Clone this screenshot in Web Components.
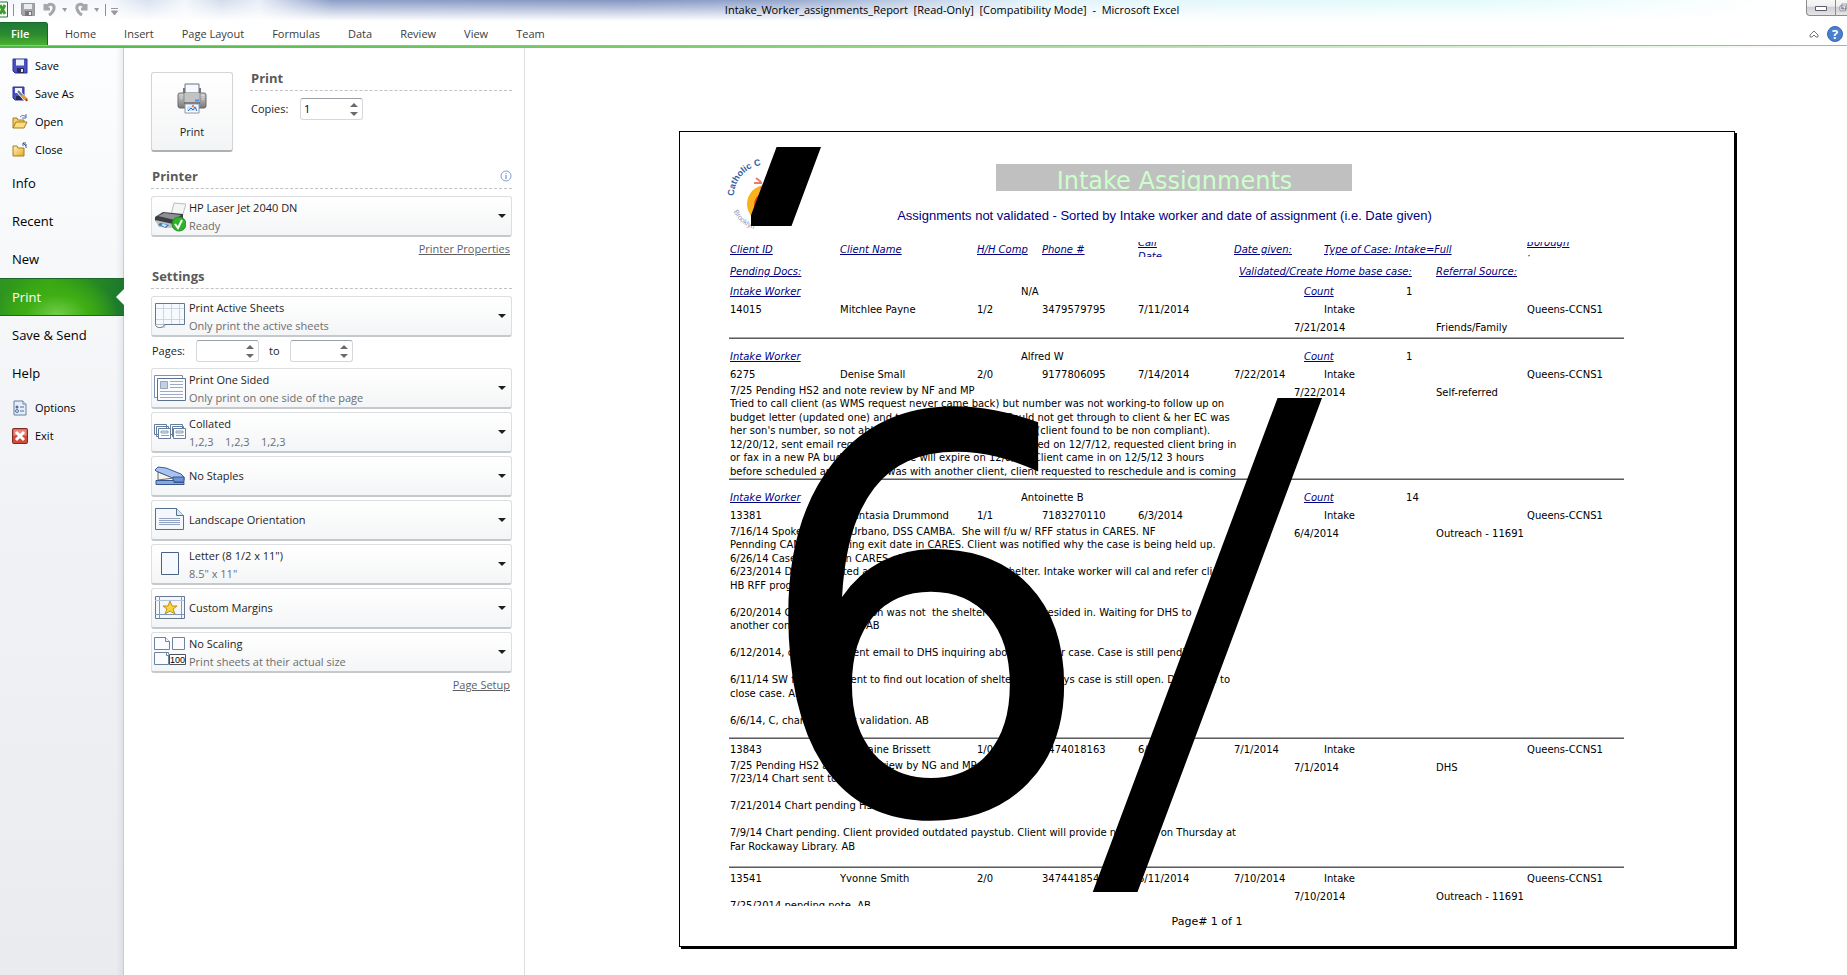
<!DOCTYPE html>
<html lang="en">
<head>
<meta charset="utf-8">
<title>Intake_Worker_assignments_Report - Microsoft Excel</title>
<style>
  html, body { margin: 0; height: 100%; }
  body {
    font-family: "Open Sans", "Noto Sans", sans-serif;
    font-size: 11px;
    line-height: 18px;
    color: #1e1e1e;
    background: #fff;
  }
</style>
</head>
<body>
<excel-window></excel-window>

<script>
// icons shared by the components
const icons = {
  save: `<svg width="16" height="16" viewBox="0 0 16 16"><path d="M1 1h14v14H3l-2-2z" fill="#4a52c0" stroke="#2b3190"/><path d="M4 1.500h8v6H4z" fill="#eef1fb"/><path d="M5 10h7v5H5z" fill="#272b55"/><path d="M9 11h2v3H9z" fill="#dfe3f7"/></svg>`,
  saveAs: `<svg width="16" height="16" viewBox="0 0 16 16"><path d="M1 1h11v13H3l-2-2z" fill="#4a52c0" stroke="#2b3190"/><path d="M3 2h7v5H3z" fill="#eef1fb"/><path d="M4 10h6v4H4z" fill="#272b55"/><path d="M5 4l9 10" stroke="#fff" stroke-width="4"/><path d="M6 5l7 8" stroke="#6b7390" stroke-width="2"/><path d="M10 9l5 5" stroke="#e0a040" stroke-width="3"/><path d="M14 13l1 2" stroke="#b03a2a" stroke-width="2"/></svg>`,
  open: `<svg width="16" height="16" viewBox="0 0 16 16"><path d="M1 14V4h4l1 2h6v3" fill="#f3cf6c" stroke="#a67c1e"/><path d="M1 14l3-6h11l-3 6z" fill="#fbdc7e" stroke="#a67c1e"/><path d="M8 3c2-2 4-2 6 0M14 0v4h-4" fill="none" stroke="#4a6ea9"/></svg>`,
  close: `<svg width="16" height="16" viewBox="0 0 16 16"><defs><linearGradient id="f" x1="0" y1="0" x2="1" y2="1"><stop stop-color="#fdf3c0"/><stop offset="1" stop-color="#e9a81f"/></linearGradient></defs><path d="M1 14V4h4l1 2h6v8z" fill="url(#f)" stroke="#a67c1e"/><path d="M14 6V2M11 4V1h3M11 1l3 3" fill="none" stroke="#3a5488"/></svg>`,
  options: `<svg width="16" height="16" viewBox="0 0 16 16"><path d="M2 1h9l3 3v11H2z" fill="#e6edf8" stroke="#64809f"/><path d="M11 1v3h3" fill="#fff" stroke="#64809f"/><circle cx="5" cy="7" r="1.500" fill="#4e6f9b"/><circle cx="5" cy="11" r="1.500" fill="none" stroke="#4e6f9b"/><path d="M8 7h4M8 11h4" stroke="#4e6f9b"/></svg>`,
  exit: `<svg width="16" height="16" viewBox="0 0 16 16"><rect x=".5" y=".5" width="15" height="15" rx="1" fill="#cf4a38" stroke="#7e2a20"/><rect x="1.500" y="1.500" width="13" height="6" fill="#e58a7b"/><path d="M4 4l8 8M12 4l-8 8" stroke="#fff" stroke-width="3"/></svg>`,
  printer: `<svg width="32" height="32" viewBox="0 0 32 32"><defs><linearGradient id="p" x1="0" y1="0" x2="0" y2="1"><stop stop-color="#d5d5d5"/><stop offset="1" stop-color="#777"/></linearGradient></defs><path d="M9 2h14v11H9z" fill="#f7f9ff" stroke="#65708a"/><path d="M7 6h2v6H7zM23 6h2v6h-2z" fill="#777"/><rect x="2" y="11" width="28" height="15" rx="2" fill="url(#p)" stroke="#6a6a6a"/><path d="M8 11v10h16V11" fill="#c3c3c3" stroke="#8c8c8c"/><path d="M8 21h16" stroke="#555"/><path d="M19 18.500h4" stroke="#4d8ef0" stroke-width="2"/><path d="M27 13v6M5 16h1" stroke="#f1f1f1" stroke-dasharray="1 1"/><path d="M9 22h14v9H9z" fill="#fff" stroke="#8a93a8"/><path d="M11 24h10v5H11z" fill="#cfe4fb"/><path d="M12 29l3-3 2 2 2-3 2 4" fill="none" stroke="#2c70c8"/><circle cx="17" cy="24" r="1" fill="#e8562a"/></svg>`,
  device: `<svg width="32" height="32" viewBox="0 0 32 32"><path d="M17 15L20 3l12 1-4 13z" fill="#f5f5f5" stroke="#bdbdbd"/><path d="M1 17l8-5 20 2v6l-9 7L1 21z" fill="#3c3f42"/><path d="M4 16l6-3 17 2-6 5z" fill="#8d9195"/><path d="M1 20l18 4v4L5 27z" fill="#b9c0c6"/><path d="M6 23l9 2-3 3-8-3z" fill="#3d78b4"/><path d="M9 24l4 1-2 2-4-2z" fill="#d8eefc"/><circle cx="25" cy="24" r="7" fill="#2fb32a" stroke="#1c8d1b"/><path d="M21 24l3 4 4-8" fill="none" stroke="#fff" stroke-width="2"/></svg>`,
  sheets: `<svg width="32" height="32" viewBox="0 0 32 32"><path d="M2 4h29v21H12l-1 3H4l-2-3z" fill="#cfd8e4"/><path d="M1.500 3.500h29v21h-29z" fill="#f6f9fe" stroke="#64788f"/><path d="M9.500 4v20M17.500 4v20M25.500 4v20M2 8.500h28M2 19.500h28" stroke="#cdd4e3"/><path d="M1.500 24.500c0 4 8 4 9 0" fill="#fff" stroke="#64788f"/></svg>`,
  oneSided: `<svg width="32" height="32" viewBox="0 0 32 32"><path d="M.5 3.500h28v22H.5z" fill="#fff" stroke="#7d92b3"/><path d="M3.500 6.500h28v22h-28z" fill="#fbfcff" stroke="#5a718f"/><path d="M6.500 9.500h7v7h-7z" fill="#c4cfdf" stroke="#94a5c0"/><path d="M16 9.500h13M16 12.500h13M16 15.500h13M6 19.500h23M6 22.500h23M6 25.500h23" stroke="#9caac4"/></svg>`,
  collated: `<svg width="32" height="32" viewBox="0 0 32 32"><g fill="#fff" stroke="#647c9d"><path d="M.5 8.500h12v10H.5zM2.500 10.500h12v10h-12zM16.500 8.500h12v10h-12zM18.500 10.500h11v10h-11z"/><path d="M4.500 12.500h12v10h-12zM19.500 12.500h12v10h-12z"/></g><path d="M7 15h7v2H7zM22 15h7v2h-7z" fill="#dbe4f3" stroke="#8ea0bd"/><path d="M7 19.500h8M22 19.500h8" stroke="#8ea0bd"/></svg>`,
  stapler: `<svg width="32" height="32" viewBox="0 0 32 32"><path d="M4 20V12l16 6z" fill="#f5f5ec" stroke="#6d6d60"/><path d="M1 10l3-3 8 1 15 6 3 3v3l-9-1L2 11z" fill="#a9c3ef" stroke="#3b5c9d"/><path d="M19 17h11v5H19z" fill="#6f92d2" stroke="#35568f"/><path d="M2 20.500h18v2h10v2H2z" fill="#88a7dc" stroke="#35568f"/></svg>`,
  landscape: `<svg width="32" height="32" viewBox="0 0 32 32"><path d="M1.500 4.500h21l7 7v14h-28z" fill="#f4f7fc" stroke="#56708f"/><path d="M22.500 4.500v7h7" fill="#dce6f6" stroke="#56708f"/><path d="M5 14.500h21M5 16.500h21M5 18.500h21M5 20.500h21" stroke="#92a2c2"/></svg>`,
  letter: `<svg width="32" height="32" viewBox="0 0 32 32"><path d="M7.500 4.500h17v22h-17z" fill="#f6f9fe" stroke="#4a6385"/></svg>`,
  margins: `<svg width="32" height="32" viewBox="0 0 32 32"><path d="M1.500 4.500h29v22h-29z" fill="#f3f6fb" stroke="#66788f"/><path d="M5.500 4v22M27.500 4v22M1 22.500h29" stroke="#7e99bd"/><path d="M1 8.500h29" stroke="#b5c3d8"/><path d="M16 9l2 5h5l-4 3 2 5-5-3-5 3 2-5-4-3h5z" fill="#fbd53c" stroke="#c48f16"/></svg>`,
  scaling: `<svg width="32" height="32" viewBox="0 0 32 32"><g fill="#fbfcff" stroke="#6c83a4"><path d="M.5 1.500h11l4 4v8H.5z"/><path d="M11.500 1.500v4h4"/><path d="M18.500 1.500h12v12h-12z"/><path d="M.5 16.500h14v12H.5z"/><path d="M12.500 16.500v3h3"/></g><path d="M15.500 18.500h16v10h-16z" fill="#fff" stroke="#4a4f58"/><text x="16" y="27" font-family="Liberation Sans, sans-serif" font-size="9" fill="#000">100</text></svg>`,
};

class ExcelWindow extends HTMLElement {
  constructor() {
    super();
    this.attachShadow({ mode: "open" });
    this.shadowRoot.innerHTML = `
      <style>
        :host { display: flex; flex-direction: column; min-height: 100%; }
        main { flex: 1; display: flex; }
        print-preview { flex: 1; }
      </style>
      <title-bar></title-bar>
      <ribbon-tabs></ribbon-tabs>
      <main>
        <backstage-nav></backstage-nav>
        <print-settings></print-settings>
        <print-preview></print-preview>
      </main>
    `;
  }
}

class TitleBar extends HTMLElement {
  constructor() {
    super();
    this.attachShadow({ mode: "open" });
    this.shadowRoot.innerHTML = `
      <style>
        :host {
          display: flex;
          height: 22px;
          overflow: hidden;
          background:
            linear-gradient(to bottom, rgba(255,255,255,0) 0, #fff 21px),
            linear-gradient(to right, #f4f7fb 0, #f4f7fb 6%, #d8e1f0 8%, #f2f6fb 10%, #d3dcec 12%, #e8eef7 14%, #8d9fc8 18%, #8496c2 34%, #93a5cd 42%, #c3d2e8 50%, #e2f4fa 56%, #e4fbfb 80%, #fff 96%);
        }
        .quick { display: flex; align-items: center; height: 20px; }
        button { border: 0; padding: 0; background: none; display: flex; }
        .name { flex: 1; text-align: center; line-height: 20px; color: #000; white-space: pre; padding-right: 22px; }
        .frame {
          display: flex;
          height: 15px;
          border: 1px solid #8b8b90;
          border-width: 0 0 1px 1px;
          border-radius: 0 0 0 4px;
          background: linear-gradient(#f7f7f8, #f0f0f2 40%, #cfcfd3 50%, #e6e6e9);
        }
        .frame button { align-items: center; justify-content: center; width: 28px; height: 15px; }
        .frame button + button { width: 12px; border-left: 1px solid #8b8b90; overflow: hidden; justify-content: flex-start; }
      </style>
      <div class="quick">
        <svg width="14" height="20" viewBox="0 0 14 20"><path d="M0 2h7.500v15H0" fill="#fff" stroke="#1f7a34"/><path d="M0 5l5 9M5 5l-5 9" stroke="#3f9d2f" stroke-width="3"/><path d="M13.500 4v12" stroke="#8e9097"/></svg>
        <button aria-label="Save"><svg width="28" height="20" viewBox="0 0 28 20"><path d="M7.500 3.500h13v12h-12l-1-1z" fill="#a6a6aa" stroke="#97979b"/><path d="M10 4h8v5h-8z" fill="#ececef"/><path d="M11 11h7v5h-7z" fill="#77777b"/><path d="M15 12h2v3h-2z" fill="#eee"/></svg></button>
        <button aria-label="Undo"><svg width="32" height="20" viewBox="0 0 32 20"><path d="M3 4v5h5M4 8c3-6 9-4 8 1-1 3-3 5-5 6" fill="none" stroke="#a6a6a9" stroke-width="3"/><path d="M20 8h5l-2 4z" fill="#9a9a9e"/></svg></button>
        <button aria-label="Redo"><svg width="32" height="20" viewBox="0 0 32 20"><path d="M12 4v5H7M11 8C8 2 2 4 3 9c1 3 3 5 5 6" fill="none" stroke="#a6a6a9" stroke-width="3"/><path d="M20 8h5l-2 4z" fill="#9a9a9e"/><path d="M31.500 4v12" stroke="#8e9097"/></svg></button>
        <button aria-label="Customize"><svg width="14" height="20" viewBox="0 0 14 20"><path d="M5 8.500h7M5.500 11h6l-3 4z" fill="#9a9a9e" stroke="#9a9a9e"/></svg></button>
      </div>
      <div class="name">Intake_Worker_assignments_Report  [Read-Only]  [Compatibility Mode]  -  Microsoft Excel</div>
      <div class="frame">
        <button aria-label="Minimize"><svg width="12" height="12" viewBox="0 0 12 12"><path d="M.5 4.500h11v4H.5z" fill="#fff" stroke="#5a5c6c"/></svg></button>
        <button aria-label="Restore"><svg width="18" height="14" viewBox="0 0 18 14"><path d="M9.500.5h8v8h-8zM6.500 3.500h9v8h-9z" fill="#fff" stroke="#5a5c6c"/><path d="M9.500 6.500h3v2h-3z" fill="#ccc" stroke="#5a5c6c"/></svg></button>
      </div>
    `;
  }
}

class RibbonTabs extends HTMLElement {
  constructor() {
    super();
    this.attachShadow({ mode: "open" });
    const tabs = ["Home", "Insert", "Page Layout", "Formulas", "Data", "Review", "View", "Team"];
    this.shadowRoot.innerHTML = `
      <style>
        :host { display: block; background: #fff; }
        nav { display: flex; height: 23px; padding-right: 4px; }
        a { padding: 0 14px; line-height: 24px; color: #3b3b3b; text-decoration: none; white-space: nowrap; }
        a.file {
          box-sizing: border-box;
          width: 48px;
          margin-right: 3px;
          padding: 0 0 0 11px;
          color: #fff;
          font-weight: 600;
          border-radius: 0 3px 0 0;
          border: 1px solid #17672a;
          border-width: 1px 1px 0 0;
          line-height: 22px;
          background: linear-gradient(#207a35, #2b8a2f 50%, #4bb030);
        }
        .tools { margin-left: auto; display: flex; align-items: center; gap: 8px; }
        button { border: 0; padding: 0; background: none; display: flex; }
        .line { height: 3px; border-top: 1px solid #a9afb5; box-sizing: border-box; background: linear-gradient(to right, #4fb848, #7ccb6c 35%, #b4e0aa 62%, #d5eed0 80%, #fff); }
      </style>
      <nav>
        <a class="file" href="#file">File</a>
        ${tabs.map((tab) => `<a href="#${tab}">${tab}</a>`).join("")}
        <div class="tools">
          <button aria-label="Minimize the Ribbon"><svg width="10" height="10" viewBox="0 0 10 10"><path d="M1 6l4-4 4 4v2H7L5 6 3 8H1z" fill="#fff" stroke="#77797f"/></svg></button>
          <button aria-label="Help"><svg width="16" height="16" viewBox="0 0 16 16"><circle cx="8" cy="8" r="7.500" fill="#4a7fd0" stroke="#3463b3"/><text x="8" y="13" text-anchor="middle" font-family="Open Sans, sans-serif" font-weight="700" font-size="13" fill="#fff">?</text></svg></button>
        </div>
      </nav>
      <div class="line"></div>
    `;
  }
}

class BackstageNav extends HTMLElement {
  constructor() {
    super();
    this.attachShadow({ mode: "open" });
    const small = (text, icon) => `<a class="small" href="#${icon}">${icons[icon]}${text}</a>`;
    const big = (text) => `<a href="#${text}">${text}</a>`;
    this.shadowRoot.innerHTML = `
      <style>
        :host {
          display: block;
          box-sizing: border-box;
          width: 124px;
          border-right: 1px solid #c8ccd2;
          background: linear-gradient(to right, transparent 116px, rgba(120,130,150,.12)), linear-gradient(#fcfdfe, #f1f3f6 45%, #e9ebef);
        }
        nav { display: flex; flex-direction: column; padding-top: 4px; }
        a { display: flex; align-items: center; height: 38px; padding-left: 12px; color: #000; text-decoration: none; font-size: 13px; }
        a.small { height: 28px; gap: 7px; font-size: 11px; }
        a:not(.small) + a.small { margin-top: 2px; }
        a.current {
          justify-content: space-between;
          margin-right: -1px;
          color: #fff;
          background: radial-gradient(ellipse 62px 42px at 46% 100%, #74cf4c, #3fae14 50%, rgba(63,174,20,0)), linear-gradient(to right, #2e9420, #38a611 40%, #1d7a2c 96%);
          box-shadow: inset 0 1px #17682a, inset 0 -1px #17682a;
        }
      </style>
      <nav>
        ${small("Save", "save")}${small("Save As", "saveAs")}${small("Open", "open")}${small("Close", "close")}
        ${big("Info")}${big("Recent")}${big("New")}
        <a class="current" href="#print">Print <svg width="8" height="16" viewBox="0 0 8 16"><path d="M8 0L0 8l8 8z" fill="#fff"/></svg></a>
        ${big("Save &amp; Send")}${big("Help")}
        ${small("Options", "options")}${small("Exit", "exit")}
      </nav>
    `;
  }
}

class SpinBox extends HTMLElement {
  constructor() {
    super();
    this.attachShadow({ mode: "open" });
    this.shadowRoot.innerHTML = `
      <style>
        :host { display: flex; align-items: center; }
        label { width: var(--label-width, 44px); }
        .box {
          box-sizing: border-box;
          display: flex;
          width: 63px;
          height: 22px;
          border: 1px solid #d5d8dc;
          border-top-color: #9da0a5;
          border-radius: 3px;
          background: #fff;
        }
        input { flex: 1; min-width: 0; border: 0; outline: 0; padding: 0 3px; background: none; font: inherit; color: #000; }
        .arrows { display: flex; flex-direction: column; justify-content: center; gap: 5px; width: 12px; }
        button { display: flex; border: 0; padding: 0; background: none; }
      </style>
      <label for="value">${this.getAttribute("label")}</label>
      <div class="box">
        <input id="value" type="text" value="${this.getAttribute("value") || ""}">
        <div class="arrows">
          <button aria-label="Increase"><svg width="8" height="4" viewBox="0 0 8 4"><path d="M0 4l4-4 4 4z" fill="#6a6a6a"/></svg></button>
          <button aria-label="Decrease"><svg width="8" height="4" viewBox="0 0 8 4"><path d="M0 0l4 4 4-4z" fill="#6a6a6a"/></svg></button>
        </div>
      </div>
    `;
  }
}

// drop-down with an icon and an optional second line
class OptionSelect extends HTMLElement {
  constructor() {
    super();
    this.attachShadow({ mode: "open" });
    const note = this.getAttribute("note");
    this.shadowRoot.innerHTML = `
      <style>
        :host {
          box-sizing: border-box;
          display: grid;
          grid-template-columns: 32px 1fr 8px;
          align-items: center;
          height: 41px;
          padding: 0 5px 0 2px;
          column-gap: 3px;
          border: 1px solid #dcdee0;
          border-bottom: 2px solid #c6c9cb;
          border-radius: 3px;
          background: linear-gradient(#fff, #f4f5f6);
        }
        select {
          grid-area: 1 / 1 / 2 / 4;
          appearance: none;
          height: 38px;
          border: 0;
          outline: 0;
          margin: 0;
          padding: 0 0 ${note ? 16 : 0}px 35px;
          background: none;
          font: inherit;
          color: #1e1e1e;
        }
        svg, .note { pointer-events: none; }
        svg { grid-row: 1; grid-column: 1; }
        .note { grid-area: 1 / 2; align-self: end; color: #6d6d6d; white-space: pre; }
        .arrow { grid-column: 3; }
      </style>
      <select aria-label="${this.getAttribute("name")}"><option>${this.textContent}</option></select>
      ${icons[this.getAttribute("icon")]}
      ${note ? `<span class="note">${note}</span>` : ""}
      <svg class="arrow" width="8" height="4" viewBox="0 0 8 4"><path d="M0 0h8L4 4z" fill="#1e1e1e"/></svg>
    `;
  }
}

class PrintSettings extends HTMLElement {
  constructor() {
    super();
    this.attachShadow({ mode: "open" });
    this.shadowRoot.innerHTML = `
      <style>
        :host {
          display: block;
          box-sizing: border-box;
          width: 401px;
          padding: 24px 12px 0 27px;
          border-right: 1px solid #dcdee2;
        }
        .top { display: flex; gap: 17px; }
        .top > div { flex: 1; }
        .go {
          box-sizing: border-box;
          display: flex;
          flex-direction: column;
          align-items: center;
          gap: 9px;
          width: 82px;
          height: 80px;
          padding: 9px 0 0;
          border: 1px solid #d2d4d6;
          border-bottom: 2px solid #aeb1b3;
          border-radius: 3px;
          background: linear-gradient(#fff, #f3f4f5);
          font: inherit;
          color: #1e1e1e;
        }
        h2 {
          display: flex;
          align-items: center;
          justify-content: space-between;
          height: 24px;
          margin: 0 0 7px;
          padding: 0 0 0 1px;
          border-bottom: 1px dashed #c2c2c2;
          font-size: 13px;
          font-weight: 700;
          color: #5a5a5a;
        }
        .top h2 { height: 18px; align-items: flex-start; line-height: 12px; }
        h2 button { display: flex; border: 0; padding: 0; background: none; }
        .top spin-box { --label-width: 49px; padding-left: 1px; }
        .link { display: flex; justify-content: flex-end; height: 24px; padding-right: 2px; align-items: center; }
        .link a { color: #5f5f5f; }
        .section { margin-top: 12px; }
        .settings { margin-top: 3px; }
        .list { display: flex; flex-direction: column; gap: 3px; }
        .pages { display: flex; gap: 10px; padding: 0 0 3px 1px; }
        .pages spin-box + spin-box { --label-width: 21px; }
      </style>
      <div class="top">
        <button class="go">${icons.printer}<span>Print</span></button>
        <div>
          <h2>Print</h2>
          <spin-box label="Copies:" value="1"></spin-box>
        </div>
      </div>
      <div class="section">
        <h2>Printer
          <button aria-label="Printer status"><svg width="12" height="12" viewBox="0 0 12 12"><circle cx="6" cy="6" r="5" fill="#fff" stroke="#7c9fd6"/><path d="M6 5v4M6 3v1" stroke="#5d7fb8"/></svg></button>
        </h2>
        <option-select name="Printer" icon="device" note="Ready">HP Laser Jet 2040 DN</option-select>
        <div class="link"><a href="#properties">Printer Properties</a></div>
      </div>
      <div class="settings">
        <h2>Settings</h2>
        <div class="list">
          <option-select name="What to print" icon="sheets" note="Only print the active sheets">Print Active Sheets</option-select>
          <div class="pages">
            <spin-box label="Pages:"></spin-box>
            <spin-box label="to"></spin-box>
          </div>
          <option-select name="Sides" icon="oneSided" note="Only print on one side of the page">Print One Sided</option-select>
          <option-select name="Collation" icon="collated" note="1,2,3    1,2,3    1,2,3">Collated</option-select>
          <option-select name="Staples" icon="stapler">No Staples</option-select>
          <option-select name="Orientation" icon="landscape">Landscape Orientation</option-select>
          <option-select name="Paper size" icon="letter" note="8.5&quot; x 11&quot;">Letter (8 1/2 x 11")</option-select>
          <option-select name="Margins" icon="margins">Custom Margins</option-select>
          <option-select name="Scaling" icon="scaling" note="Print sheets at their actual size">No Scaling</option-select>
        </div>
        <div class="link"><a href="#setup">Page Setup</a></div>
      </div>
    `;
  }
}

class PrintPreview extends HTMLElement {
  constructor() {
    super();
    this.attachShadow({ mode: "open" });
    this.shadowRoot.innerHTML = `
      <style>
        :host { display: flex; justify-content: center; box-sizing: border-box; padding: 83px 0 24px 42px; }
      </style>
      <report-sheet></report-sheet>
    `;
  }
}

const groups = [
  {
    worker: "N/A", count: 1, height: 18,
    client: ["14015", "Mitchlee Payne", "1/2", "3479579795", "7/11/2014", ""],
    validated: "7/21/2014", source: "Friends/Family", notes: [],
  },
  {
    worker: "Alfred W", count: 1, height: 94,
    client: ["6275", "Denise Small", "2/0", "9177806095", "7/14/2014", "7/22/2014"],
    validated: "7/22/2014", source: "Self-referred",
    notes: [
      "7/25 Pending HS2 and note review by NF and MP",
      "Tried to call client (as WMS request never came back) but number was not working-to follow up on",
      "budget letter (updated one) and to set up intake appt. Could not get through to client & her EC was",
      "her son's number, so not able to reach her again. HS2 12/13 (client found to be non compliant).",
      "12/20/12, sent email requesting update. Budget was completed on 12/7/12, requested client bring in",
      "or fax in a new PA budget as this one will expire on 12/8/12. Client came in on 12/5/12 3 hours",
      "before scheduled appt. Worker was with another client, client requested to reschedule and is coming",
    ],
  },
  {
    worker: "Antoinette B", count: 14, height: 212,
    client: ["13381", "Shantasia Drummond", "1/1", "7183270110", "6/3/2014", ""],
    validated: "6/4/2014", source: "Outreach - 11691",
    notes: [
      "7/16/14 Spoke with Ms. Urbano, DSS CAMBA.  She will f/u w/ RFF status in CARES. NF",
      "Pennding CAMBA, awaiting exit date in CARES. Client was notified why the case is being held up.",
      "6/26/14 Case was still in CARES.  NF",
      "6/23/2014 DHS contacted and informed us of her new shelter. Intake worker will cal and refer client",
      "HB RFF program.",
      "",
      "6/20/2014 Called. The location was not  the shelter that client resided in. Waiting for DHS to",
      "another confirmed shelter. AB",
      "",
      "6/12/2014, caseworker sent email to DHS inquiring about all of her case. Case is still pending. AB",
      "",
      "6/11/14 SW from DHS went to find out location of shelter.  PATH says case is still open. DHS need to",
      "close case. AB",
      "",
      "6/6/14, C, chart ready for validation. AB",
    ],
  },
  {
    height: 107,
    client: ["13843", "Germaine Brissett", "1/0", "3474018163", "6/30/2014", "7/1/2014"],
    validated: "7/1/2014", source: "DHS",
    notes: [
      "7/25 Pending HS2 and note review by NG and MP",
      "7/23/14 Chart sent to NF",
      "",
      "7/21/2014 Chart pending HS2",
      "",
      "7/9/14 Chart pending. Client provided outdated paystub. Client will provide new ones on Thursday at",
      "Far Rockaway Library. AB",
    ],
  },
  {
    height: 18, cut: true,
    client: ["13541", "Yvonne Smith", "2/0", "3474418540", "6/11/2014", "7/10/2014"],
    validated: "7/10/2014", source: "Outreach - 11691",
    notes: ["7/25/2014 pending note. AB"],
  },
];

class ReportSheet extends HTMLElement {
  constructor() {
    super();
    this.attachShadow({ mode: "open" });
    const template = document.createElement("template");
    template.innerHTML = `
      <style>
        :host {
          display: block;
          position: relative;
          box-sizing: border-box;
          flex: none;
          width: 11in;
          height: 8.5in;
          padding: 32px 110px 0 49px;
          border: 1px solid #000;
          box-shadow: 2px 2px #000;
          background: #fff;
          color: #000;
          font-family: "DejaVu Sans", Verdana, sans-serif;
          font-size: 10px;
          line-height: 13px;
        }
        header { display: flex; justify-content: center; height: 75px; padding-right: 4px; }
        h1 {
          width: 356px;
          height: 27px;
          margin: 0;
          overflow: hidden;
          background: #c0c0c0;
          color: #cfc;
          text-align: center;
          font-size: 24px;
          font-weight: 400;
          line-height: 34px;
        }
        .heading { display: flex; flex-direction: column; align-items: center; gap: 16px; }
        h2 { margin: 0; padding-right: 20px; color: #000080; font: 13px/18px "Liberation Sans", Arial, sans-serif; white-space: nowrap; }
        .logo { position: absolute; left: 46px; top: 26px; }
        table { table-layout: fixed; width: 895px; border-collapse: collapse; }
        th, td { box-sizing: border-box; height: 18px; padding: 0 0 1px 1px; text-align: left; font-weight: 400; white-space: nowrap; vertical-align: middle; }
        th { height: 22px; }
        th, .tag { color: #000080; font-style: italic; text-decoration: underline; }
        .clip { display: flex; flex-direction: column; justify-content: center; height: 15px; overflow: hidden; }
        .clip span { flex: none; line-height: 14px; text-decoration: underline; }
        .indent { padding-left: 6px; }
        .rule td { height: 2px; padding: 0; background: linear-gradient(#a8a8a8 50%, #5c5c5c 50%); line-height: 0; }
        .gap td { height: 9px; line-height: 0; }
        .near td { height: 2px; line-height: 0; }
        .detail td { padding-bottom: 0; vertical-align: top; line-height: 18px; }
        .notes { overflow: hidden; line-height: 13px; white-space: pre; }
        .notes span { display: block; height: 13px; }
        .notes span:nth-child(even) { height: 14px; line-height: 14px; }
        .notes.cut { box-sizing: border-box; padding-top: 11px; }
        footer { padding-top: 7px; margin-right: -61px; text-align: center; font-size: 11px; line-height: 18px; }
        .mark { position: absolute; left: 0; top: 0; pointer-events: none; }
        .slash { font-family: "Open Sans", sans-serif; font-size: 678px; font-weight: 300; stroke: #000; stroke-width: 10px; }
      </style>
      <header>
        <svg class="logo" width="80" height="76" viewBox="0 0 80 76" aria-hidden="true">
          <defs>
            <path id="upper" d="M8 38a31 31 0 0 1 62 0"/>
            <path id="lower" d="M4 38a35 35 0 0 0 70 0"/>
          </defs>
          <circle cx="40" cy="46" r="19" fill="#f9b21b"/>
          <circle cx="41" cy="47" r="13" fill="#e8411c"/>
          <path d="M28 25h8M30 20l5 4M34 30h8" stroke="#e3806c" stroke-width="2"/>
          <text font-size="9" font-weight="700" fill="#2e62a4" font-family="Liberation Sans, sans-serif"><textPath href="#upper">Catholic C</textPath></text>
          <text font-size="7" fill="#7d98ba" font-family="Liberation Sans, sans-serif"><textPath href="#lower" startOffset="16">Brooklyn</textPath></text>
        </svg>
        <div class="heading">
          <h1>Intake Assignments</h1>
          <h2>Assignments not validated - Sorted by Intake worker and date of assignment (i.e. Date given)</h2>
        </div>
      </header>
      <table>
        <colgroup>${[110, 137, 44, 21, 96, 96, 60, 10, 20, 82, 30, 91, 98].map((w) => `<col style="width:${w}px">`).join("")}</colgroup>
        <thead>
          <tr>
            <th>Client ID</th><th>Client Name</th><th colspan="2">H/H Comp</th><th>Phone #</th>
            <th><div class="clip"><span>Call</span><span>Date</span></div></th>
            <th colspan="3">Date given:</th><th colspan="3">Type of Case: Intake=Full</th>
            <th><div class="clip"><span>Borough</span><span>:</span></div></th>
          </tr>
          <tr><th colspan="6">Pending Docs:</th><th class="indent" colspan="5">Validated/Create Home base case:</th><th colspan="2">Referral Source:</th></tr>
        </thead>
        <tbody></tbody>
      </table>
      <footer>Page# 1 of 1</footer>
      <svg class="mark" width="1054" height="814" viewBox="0 0 1054 814">
        <text x="70" y="681" font-family="DejaVu Sans" font-size="548">6</text>
        <text class="slash" x="412" y="755">/</text>
        <svg x="71" y="15" width="70" height="79"><text class="slash" x="-160" y="489">/</text></svg>
      </svg>
    `;
    this.shadowRoot.appendChild(template.content.cloneNode(true));
    this.render();
  }

  render() {
    const escape = (s) => s.replace(/&/g, "&amp;");
    this.shadowRoot.querySelector("tbody").innerHTML = groups
      .map((g, i) => {
        const [id, name, size, phone, call, given] = g.client;
        return `
          ${i ? `<tr class="rule"><td colspan="13"></td></tr><tr class="${g.worker ? "gap" : "near"}"><td colspan="13"></td></tr>` : ""}
          ${g.worker ? `<tr><td colspan="3"><span class="tag">Intake Worker</span></td><td colspan="5">${g.worker}</td><td colspan="2"><span class="tag">Count</span></td><td colspan="3">${g.count}</td></tr>` : ""}
          <tr><td>${id}</td><td>${name}</td><td colspan="2">${size}</td><td>${phone}</td><td>${call}</td><td colspan="3">${given}</td><td colspan="3">Intake</td><td>Queens-CCNS1</td></tr>
          <tr class="detail">
            <td colspan="7"><div class="notes${g.cut ? " cut" : ""}" style="height:${g.height}px">${g.notes.map((n) => `<span>${escape(n)}</span>`).join("")}</div></td>
            <td colspan="4">${g.validated}</td><td colspan="2">${g.source}</td>
          </tr>`;
      })
      .join("");
  }
}

customElements.define("title-bar", TitleBar);
customElements.define("ribbon-tabs", RibbonTabs);
customElements.define("backstage-nav", BackstageNav);
customElements.define("spin-box", SpinBox);
customElements.define("option-select", OptionSelect);
customElements.define("print-settings", PrintSettings);
customElements.define("report-sheet", ReportSheet);
customElements.define("print-preview", PrintPreview);
customElements.define("excel-window", ExcelWindow);
</script>
</body>
</html>
